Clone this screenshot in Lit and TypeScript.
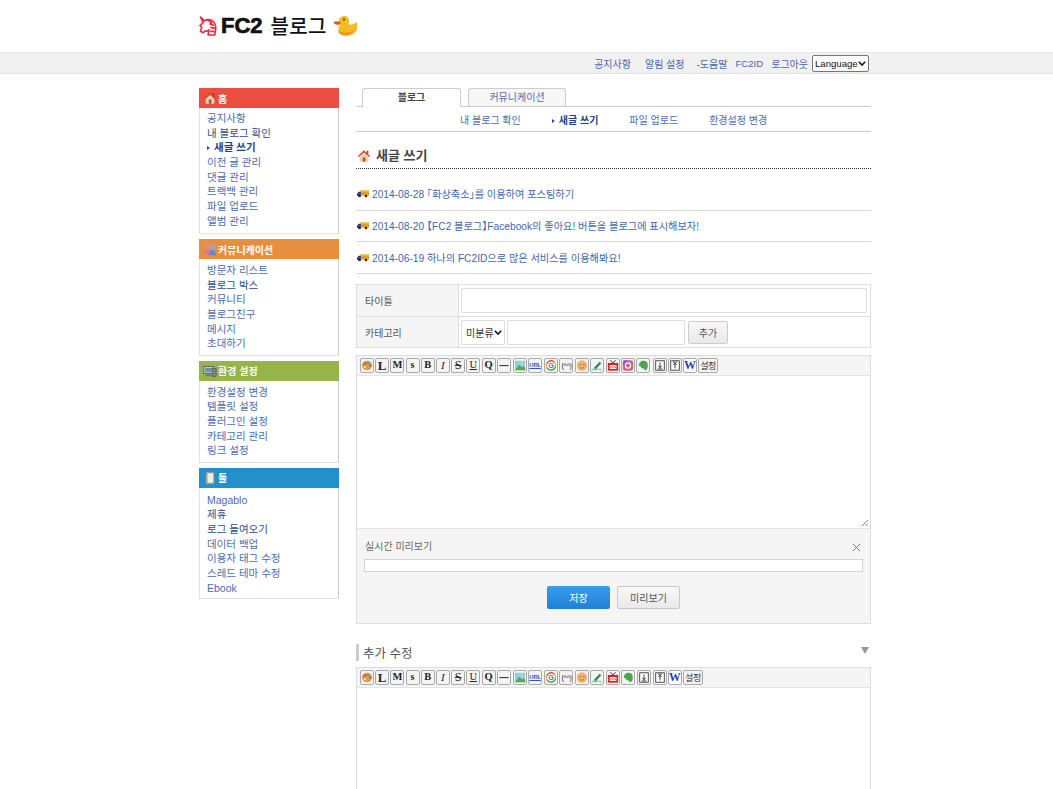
import { LitElement, html, css, svg } from "lit";
import { customElement } from "lit/decorators.js";

const house = html`<svg class="ico" viewBox="0 0 16 16" width="14" height="14"><path d="M8 1.500 1 8l1.200 1.200L8 4l5.800 5.200L15 8z" fill="#d9432f"/><path d="M3 9 8 4.600 13 9v5.500H3z" fill="#e8d3b0"/><rect x="6.600" y="9.600" width="3" height="4.900" fill="#a0622d"/><rect x="11" y="2" width="2" height="3.400" fill="#c0392b"/></svg>`;
const people = html`<svg class="ico" viewBox="0 0 16 16" width="14" height="14"><circle cx="5" cy="5" r="2.800" fill="#e98a8a"/><path d="M1 14c0-4 1.600-5.500 4-5.500S9 10 9 14z" fill="#d97a9a"/><circle cx="10.800" cy="6" r="2.800" fill="#8aa9e8"/><path d="M6.600 15c0-4 1.800-5.600 4.200-5.600S15 11 15 15z" fill="#5f87d8"/></svg>`;
const pc = html`<svg class="ico" viewBox="0 0 16 16" width="14" height="14"><rect x="1" y="3" width="11" height="8" fill="#cfd8dc" stroke="#555"/><rect x="2.500" y="4.500" width="8" height="5" fill="#6d8fa8"/><rect x="11" y="5" width="4" height="9" fill="#78848c" stroke="#444" stroke-width=".6"/><rect x="3" y="12" width="7" height="2" fill="#777"/></svg>`;
const book = html`<svg class="ico" viewBox="0 0 16 16" width="14" height="14"><rect x="3" y="1" width="10" height="14" rx="1" fill="#9b948a"/><rect x="5" y="2.500" width="6.800" height="11" fill="#eeeeea"/></svg>`;
const truck = html`<svg class="truck" viewBox="0 0 14 10" width="12" height="9"><rect x="4" y="1.500" width="10" height="6" fill="#e09a25"/><rect x="4" y="1.500" width="10" height="2" fill="#f2b845"/><path d="M0 7.800V5l2-2h2.500v4.800z" fill="#2a3f8a"/><circle cx="3" cy="8" r="1.500" fill="#222"/><circle cx="10.500" cy="8" r="1.500" fill="#222"/></svg>`;
const chev = html`<svg class="chev" width="8" height="5" viewBox="0 0 8 5"><path d="M.8.8 4 4 7.200.8" fill="none" stroke="#111" stroke-width="1.600"/></svg>`;

const wrap = (body: unknown) => html`<svg viewBox="0 0 14 14" width="13" height="13">${body}</svg>`;
type Tool = { t?: string; c?: string; i?: unknown; w?: number; ml?: number };
const T = {
  palette: { i: wrap(svg`<ellipse cx="7" cy="7" rx="6" ry="5.600" fill="#d99a56"/><circle cx="4.500" cy="5" r="1.200" fill="#c33"/><circle cx="8" cy="3.800" r="1.100" fill="#3a7"/><circle cx="10.500" cy="6.600" r="1.100" fill="#36b"/><circle cx="4.400" cy="9" r="1.200" fill="#eee"/>`) },
  L: { t: "L", c: "big" }, M: { t: "M", c: "mid" }, s: { t: "s", c: "small" },
  B: { t: "B", c: "mid" }, I: { t: "I", c: "ital" },
  S: { t: "S", c: "strike" }, U: { t: "U", c: "under" }, Q: { t: "Q", c: "mid" },
  hr: { i: wrap(svg`<rect x="1.500" y="6.500" width="11" height="1.200" fill="#333"/>`) },
  img: { i: wrap(svg`<rect x="1" y="1.500" width="12" height="11" fill="#8fd0e8"/><path d="M1 12.500 6 6l3 3 2-1.500 2 2.500v2.500z" fill="#5aa84a"/><circle cx="9.500" cy="4.500" r="1.300" fill="#f4e04a"/>`), ml: 1 },
  url: { i: html`<span class="urlt">URL</span>` },
  g: { i: wrap(svg`<circle cx="7" cy="7" r="5.500" fill="#fff" stroke="#e8a33d" stroke-width="1.400"/><path d="M2.200 9.500A5.500 5.500 0 0 0 12.400 8" fill="none" stroke="#4caf50" stroke-width="1.400"/><path d="M2 5A5.500 5.500 0 0 1 11 3" fill="none" stroke="#e0483c" stroke-width="1.400"/><text x="7" y="10" font-size="8.500" font-weight="700" text-anchor="middle" fill="#3b6fd8" font-family="Liberation Sans">G</text>`), ml: 1 },
  kao: { t: "(^^)", c: "kao" },
  face: { i: wrap(svg`<circle cx="7" cy="7" r="6" fill="#eeb26e"/><circle cx="4.800" cy="5.800" r=".8" fill="#a56a2d"/><circle cx="9.200" cy="5.800" r=".8" fill="#a56a2d"/><path d="M4.500 9c1.500 1.500 3.500 1.500 5 0" stroke="#a56a2d" fill="none"/>`) },
  pen: { i: wrap(svg`<path d="M4 9 10 2.500l2 2L6 11H4z" fill="#2f8f4e"/><path d="M1 12c2-2 3 1 5 0s3-1 6 0" stroke="#55b070" fill="none"/>`) },
  tv: { i: wrap(svg`<rect x="1" y="4" width="12" height="9" fill="#d8201f"/><rect x="3" y="6.500" width="8" height="4.500" fill="#fff"/><path d="M4.500 7.500v2.500M7 7.500v2.500M9.500 7.500v2.500" stroke="#d8201f"/><path d="M4 .8 7 4l3-3.200" stroke="#222" fill="none"/>`), ml: 1 },
  insta: { i: wrap(svg`<rect x="1" y="1" width="12" height="12" rx="3" fill="#d9607a"/><rect x="1" y="1" width="6" height="6" rx="2" fill="#8a5ad0"/><circle cx="7" cy="7" r="3" fill="none" stroke="#fff" stroke-width="1.400"/>`) },
  ever: { i: wrap(svg`<path d="M3 3.500 6 1.500c3-.5 6 0 6.500 4 .4 3.500-.5 6.500-2.500 7-1.500.3-2-.8-1.500-2-2 .2-4-.5-4.500-3H2z" fill="#4ea54a"/>`) },
  down: { i: wrap(svg`<rect x="2" y="1.500" width="10" height="11" fill="#fff" stroke="#333"/><path d="M7 3.500v6M5 7.500l2 2.200 2-2.200" stroke="#222" fill="none"/><path d="M4.500 11h5" stroke="#222"/>`), ml: 1 },
  up: { i: wrap(svg`<rect x="2" y="1.500" width="10" height="11" fill="#fff" stroke="#333"/><path d="M7 10.500v-6M5 6.500l2-2.200 2 2.200" stroke="#222" fill="none"/><path d="M4.500 3h5" stroke="#222"/>`) },
  W: { t: "W", c: "wiki" },
  set: { t: "설정", c: "setting", w: 20 },
} as Record<string, Tool>;

const bar1 = ["palette","L","M","s","B","I","S","U","Q","hr","img","url","g","kao","face","pen","tv","insta","ever","down","up","W","set"];
const bar2 = bar1.filter((k) => k !== "insta");

const menus = [
  { cls: "red", icon: house, title: "홈", items: [["공지사항"],["내 블로그 확인","d"],["새글 쓰기","a"],["이전 글 관리"],["댓글 관리"],["트랙백 관리"],["파일 업로드"],["앨범 관리"]] },
  { cls: "org", icon: people, title: "커뮤니케이션", items: [["방문자 리스트"],["블로그 박스","d"],["커뮤니티"],["블로그친구"],["메시지"],["초대하기"]] },
  { cls: "grn", icon: pc, title: "환경 설정", items: [["환경설정 변경"],["템플릿 설정"],["플러그인 설정"],["카테고리 관리"],["링크 설정"]] },
  { cls: "blu", icon: book, title: "툴", items: [["Magablo"],["제휴","d"],["로그 들여오기","d"],["데이터 백업"],["이용자 태그 수정"],["스레드 테마 수정"],["Ebook"]] },
];

const news = [
  html`2014-08-28 <i>「</i>화상축소<i>」</i>를 이용하여 포스팅하기`,
  html`2014-08-20 <i>【</i>FC2 블로그<i>】</i>Facebook의 좋아요! 버튼을 블로그에 표시해보자!`,
  html`2014-06-19 하나의 FC2ID으로 많은 서비스를 이용해봐요!`,
];

@customElement("app-root")
export class AppRoot extends LitElement {
  static styles = css`
    :host { display: block; height: 789px; overflow: hidden; background: #fff; font-family: "Liberation Sans", "Noto Sans CJK KR", sans-serif; font-size: 10.5px; color: #333; }
    * { box-sizing: border-box; }
    .head { height: 52px; padding-left: 199px; display: flex; align-items: center; }
    .logo { display: flex; align-items: center; height: 52px; }
    .fc2 { font: 900 22px/1 "Liberation Sans", sans-serif; color: #111; margin-left: 3px; -webkit-text-stroke: .7px #111; letter-spacing: 0; }
    .blog { font: 500 20px/1 "Noto Sans CJK KR", sans-serif; color: #111; margin-left: 8px; letter-spacing: .3px; }
    .duck { margin-left: 6px; }
    .top { height: 22px; background: #f1f1f1; border-top: 1px solid #e8e8e8; border-bottom: 1px solid #e0e0e0; display: flex; justify-content: flex-end; align-items: center; padding-right: 184px; }
    .top a { color: #4668a8; margin-left: 14px; font-size: 10px; white-space: nowrap; }
    .top a.n { margin-left: 8px; }
    .top a.h { margin-left: 12px; }
    .top a.id { font-size: 9.600px; }
    .sel { position: relative; display: block; flex: none; }
    .sel select { display: block; appearance: none; background: #fff; color: #111; }
    .chev { position: absolute; right: 3px; top: 50%; margin-top: -2px; pointer-events: none; }
    .top .sel { margin-left: 4px; }
    .top select { width: 57px; height: 17px; font: 9.600px "Liberation Sans", sans-serif; padding: 0 0 0 2px; border: 1px solid #767676; border-radius: 2px; }
    .page { display: flex; padding: 14px 0 0 199px; width: 871px; gap: 17px; align-items: flex-start; }
    .side { width: 140px; flex: none; display: flex; flex-direction: column; gap: 5px; }
    .box { border: 1px solid #e2e2e2; border-right-color: #ccc; border-top: 0; background: #fff; }
    .bh { height: 20px; display: flex; align-items: center; gap: 1px; padding-left: 4px; color: #fff; font-weight: 700; font-size: 10px; margin: 0 0 0 -1px; width: 140px; }
    .red { background: #ec4e3f; } .org { background: #e88f3f; } .grn { background: #95b54c; } .blu { background: #2490c9; }
    .ico { flex: none; }
    .bl { padding: 4px 0 3.500px 7px; }
    .red + .bl { padding-top: 3px; padding-bottom: 4.500px; }
    .blu + .bl { padding-top: 5px; padding-bottom: 2.500px; }
    .bl div { height: 14.700px; line-height: 14.700px; color: #4a6db0; white-space: nowrap; }
    .bl .d { color: #2b4c88; }
    .bl .a { color: #1f3f86; font-weight: 700; }
    .a::before { content: ""; display: inline-block; width: 0; height: 0; border-left: 3px solid #1f4fb0; border-top: 2.500px solid transparent; border-bottom: 2.500px solid transparent; margin-right: 4px; vertical-align: 1px; }
    .main { width: 515px; flex: none; }
    .tabs { display: flex; gap: 7px; padding-left: 6px; height: 19px; border-bottom: 1px solid #ccc; align-items: flex-start; }
    .tab { width: 99px; height: 19px; border: 1px solid #ccc; border-bottom: 0; border-radius: 3px 3px 0 0; text-align: center; line-height: 18px; background: #fff; font-weight: 700; font-size: 10px; color: #444; position: relative; z-index: 1; }
    .tab.off { width: 98px; height: 18px; background: #f7f7f7; font-weight: 400; color: #4a6db0; }
    .sub { height: 25px; border-bottom: 1px solid #ccc; display: flex; padding-left: 104px; gap: 31px; align-items: center; color: #4a6db0; font-size: 10px; white-space: nowrap; }
    .sub .a { color: #1f3f86; font-weight: 700; }
    h2 { margin: 0; height: 37px; padding: 11px 0 0 1px; border-bottom: 1px dotted #333; font-size: 13px; line-height: 17px; font-weight: 700; color: #444; display: flex; align-items: center; gap: 5px; }
    .nw { margin-top: 10px; }
    .nw div { height: 31.700px; border-bottom: 1px solid #d8d8d8; display: flex; align-items: center; gap: 3px; padding: 0 0 1px 1px; color: #4068b0; white-space: nowrap; font-size: 10.200px; }
    .nw i { font-style: normal; font-feature-settings: "halt"; }
    .form { margin-top: 10px; border: 1px solid #ddd; border-bottom: 0; display: grid; grid-template-columns: 102px 1fr; grid-template-rows: 32px 31px; }
    .lab { background: #f5f5f5; border-bottom: 1px solid #ddd; border-right: 1px solid #ddd; padding-left: 8px; display: flex; align-items: center; color: #555; font-size: 10px; }
    .val { border-bottom: 1px solid #ddd; display: flex; align-items: center; padding-left: 2px; gap: 2px; }
    .inp { height: 25px; border: 1px solid #ddd; background: #fff; border-radius: 1px; }
    .wide { flex: 1; margin-right: 3px; }
    .mid-inp { width: 178px; }
    .val select { width: 44px; height: 25px; border: 1px solid #ddd; font: 10px "Liberation Sans", "Noto Sans CJK KR", sans-serif; padding: 2px 0 0 4px; color: #333; border-radius: 2px; }
    .add { width: 40px; height: 23px; margin-left: 1px; border: 1px solid #ccc; border-radius: 2px; background: linear-gradient(#f7f7f7,#e9e9e9); color: #555; font-size: 10px; display: flex; align-items: center; justify-content: center; }
    .ed { margin-top: 7px; border: 1px solid #ddd; background: #fff; }
    .tb { height: 20px; background: #f5f5f5; border-bottom: 1px solid #e4e4e4; display: flex; align-items: center; padding: 0 0 1px 3px; gap: 1.200px; }
    .b { width: 14px; height: 15px; flex: none; border: 1px solid #aaa; border-radius: 2px; background: #f4f4f4; display: flex; align-items: center; justify-content: center; font-family: "Liberation Serif", serif; color: #222; overflow: hidden; line-height: 1; }
    .big { font-size: 13px; font-weight: 700; } .mid { font-size: 10.500px; font-weight: 700; } .small { font-size: 10px; font-weight: 700; }
    .ital { font-style: italic; font-size: 11px; } .strike { text-decoration: line-through; font-size: 12px; } .under { text-decoration: underline; font-size: 10.500px; }
    .kao { font: 7px "Liberation Sans", sans-serif; letter-spacing: -.3px; }
    .wiki { font-size: 12px; font-weight: 700; color: #1f3fb0; background: #fff; }
    .setting { font: 9px "Noto Sans CJK KR", sans-serif; color: #333; letter-spacing: -.3px; }
    .urlt { font: 700 6px "Liberation Sans", sans-serif; color: #2f55c8; text-decoration: underline; letter-spacing: -.3px; }
    .area { height: 152px; position: relative; }
    .grip { position: absolute; right: 1px; bottom: 1px; }
    .pv { height: 95px; background: #f5f5f5; border-top: 1px solid #e4e4e4; padding: 11px 7px 0 7px; position: relative; }
    .pvt { color: #666; line-height: 13px; font-size: 10px; padding-left: 1px; }
    .close { position: absolute; right: 9px; top: 14px; }
    .line { height: 13px; border: 1px solid #d4d4d4; background: #fff; margin-top: 6px; }
    .btns { display: flex; gap: 7px; justify-content: center; margin-top: 14px; }
    .btn { width: 63px; height: 23px; border-radius: 2px; display: flex; align-items: center; justify-content: center; font-size: 10px; }
    .save { background: linear-gradient(#3a9ee9,#1f7fd8); color: #fff; }
    .prev { background: linear-gradient(#f7f7f7,#e9e9e9); border: 1px solid #c8c8c8; color: #555; }
    .sec { margin-top: 20px; height: 17px; border-left: 3px solid #ccc; padding-left: 4px; display: flex; align-items: center; justify-content: space-between; font-size: 12.500px; color: #555; }
    .tri { width: 0; height: 0; border-left: 4px solid transparent; border-right: 4px solid transparent; border-top: 7px solid #999; margin: 0 2px 4px 0; }
    .ed2 { margin-top: 6px; height: 200px; }
  `;

  private tool(k: string) {
    const t = T[k];
    const st = `${t.w ? `width:${t.w}px;` : ""}${t.ml ? `margin-left:${t.ml}px;` : ""}`;
    return html`<span class="b ${t.c ?? ""}" style=${st}>${t.t ?? t.i}</span>`;
  }

  render() {
    return html`
      <div class="head"><div class="logo">
        <svg viewBox="0 0 20 22" width="19" height="21"><path d="M1.500 1 6 5c2.500-1.500 5.500-1.500 8 0 3 2 4 5.500 3.500 9.500L16.500 20h-7l1-5.500c-1 1.200-2.500 1.500-4 1.200L4.500 17.500 1.500 16l1.500-4-2-2L4.500 7z" fill="#fff" stroke="#ee2a3a" stroke-width="1.700" stroke-linejoin="round"/><path d="M9 4l5 3.500M11 8l5 2M12 12l5 1M11.500 16l5 .5" stroke="#ee2a3a" stroke-width="1.800"/></svg>
        <span class="fc2">FC2</span><span class="blog">블로그</span>
        <svg class="duck" viewBox="0 0 26 22" width="26" height="22"><path d="M8 2c3.500-2.500 8-.5 8 3.500 0 1.500 0 2.500-.5 3.500 2 1.500 5 .5 8-2 1.500 4 1 8-1.500 10.500-2.500 2.500-6 3.500-10 3-4-.5-6.500-3-6.500-6.500 0-2 1.500-4 2-5C5 8 5.500 4 8 2z" fill="#f6bb1e"/><path d="M5 15c3 3 10 4 16 .5-2 4-6 5.500-10 5s-5.500-2.500-6-5.500z" fill="#e8981a"/><path d="M7 6.500 1 6.500c-1 1 .5 2.500 2 3s3 .5 4.500-.5z" fill="#e8541c"/><circle cx="11" cy="4.500" r="1" fill="#3a2a10"/></svg>
      </div></div>
      <div class="top">
        <a>공지사항</a><a>알림 설정</a><a class="h">-도움말</a><a class="n id">FC2ID</a><a class="n">로그아웃</a>
        <span class="sel"><select><option>Language</option></select>${chev}</span>
      </div>
      <div class="page">
        <div class="side">
          ${menus.map((m) => html`<div class="box">
            <div class="bh ${m.cls}">${m.icon}<span>${m.title}</span></div>
            <div class="bl">${m.items.map((i) => html`<div class=${i[1] ?? ""}>${i[0]}</div>`)}</div>
          </div>`)}
        </div>
        <div class="main">
          <div class="tabs"><div class="tab">블로그</div><div class="tab off">커뮤니케이션</div></div>
          <div class="sub"><span>내 블로그 확인</span><span class="a">새글 쓰기</span><span>파일 업로드</span><span>환경설정 변경</span></div>
          <h2>${house}<span>새글 쓰기</span></h2>
          <div class="nw">${news.map((n) => html`<div>${truck}<span>${n}</span></div>`)}</div>
          <div class="form">
            <div class="lab">타이틀</div><div class="val"><div class="inp wide"></div></div>
            <div class="lab">카테고리</div>
            <div class="val"><span class="sel"><select><option>미분류</option></select>${chev}</span><div class="inp mid-inp"></div><div class="add">추가</div></div>
          </div>
          <div class="ed">
            <div class="tb">${bar1.map((k) => this.tool(k))}</div>
            <div class="area"><svg class="grip" width="8" height="8" viewBox="0 0 8 8"><path d="M1 7l6-6M4.500 7 7 4.500" stroke="#888"/></svg></div>
            <div class="pv">
              <div class="pvt">실시간 미리보기</div>
              <svg class="close" width="9" height="9" viewBox="0 0 9 9"><path d="M1 1l7 7M8 1 1 8" stroke="#777"/></svg>
              <div class="line"></div>
              <div class="btns"><div class="btn save">저장</div><div class="btn prev">미리보기</div></div>
            </div>
          </div>
          <div class="sec"><span>추가 수정</span><span class="tri"></span></div>
          <div class="ed ed2"><div class="tb">${bar2.map((k) => this.tool(k))}</div></div>
        </div>
      </div>
    `;
  }
}
